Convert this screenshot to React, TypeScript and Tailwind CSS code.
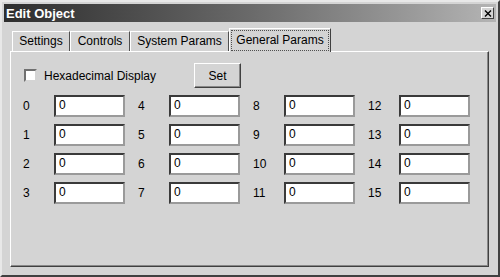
import React from "react";

const font = { fontFamily: '"Liberation Sans", Arial, sans-serif' };

function Field({ label }: { label: string }) {
  return (
    <div className="flex items-center h-[22px]">
      <span className="w-[31px] text-[12px] text-black">{label}</span>
      <div className="w-[71px] h-[22px] bg-white border-2 border-t-[#3a3a3a] border-l-[#3a3a3a] border-r-[#9a9a9a] border-b-[#9a9a9a] pl-[3px] text-[12px] leading-[16px] text-black">
        0
      </div>
    </div>
  );
}

function Tab({ label, active }: { label: string; active?: boolean }) {
  if (active) {
    return (
      <div className="relative z-10 -mb-px h-[24px] w-[102px] bg-[#d4d4d4] border border-b-0 border-t-white border-l-white border-r-[#404040] p-px">
        <div className="h-full border border-dotted border-[#505050] text-[12px] leading-[19px] text-center text-black whitespace-nowrap">
          {label}
        </div>
      </div>
    );
  }
  return (
    <div className="w-full h-[20px] bg-[#d4d4d4] border border-b-0 border-t-white border-l-white border-r-[#505050] text-[12px] leading-[19px] text-center text-black whitespace-nowrap">
      {label}
    </div>
  );
}

export default function App() {
  const cols = [
    ["0", "1", "2", "3"],
    ["4", "5", "6", "7"],
    ["8", "9", "10", "11"],
    ["12", "13", "14", "15"],
  ];

  return (
    <div
      style={font}
      className="w-[500px] h-[277px] bg-[#d4d4d4] border-2 border-t-[#e8e8e8] border-l-[#e8e8e8] border-r-[#404040] border-b-[#404040] p-[2px] flex flex-col"
    >
      <div className="h-[18px] flex items-center justify-between bg-gradient-to-r from-[#2e2e2e] via-[#6a6a6a] to-[#b4b4b4] pl-[2px] pr-[2px]">
        <span className="text-[13px] font-bold text-white leading-none">Edit Object</span>
        <div className="w-[13px] h-[12px] bg-[#d4d4d4] border border-t-white border-l-white border-r-[#404040] border-b-[#404040] flex items-center justify-center">
          <svg width="8" height="7" viewBox="0 0 8 7">
            <path d="M1 0.5 L7 6.5 M7 0.5 L1 6.5" stroke="#000" strokeWidth="1.4" />
          </svg>
        </div>
      </div>

      <div className="mt-[6px] ml-[6px] mr-[7px] flex flex-col">
        <div className="flex items-end pl-[2px]">
          <div className="w-[58px]"><Tab label="Settings" /></div>
          <div className="w-[60px]"><Tab label="Controls" /></div>
          <div className="w-[99px]"><Tab label="System Params" /></div>
          <Tab label="General Params" active />
        </div>

        <div className="h-[216px] border border-t-white border-l-white border-r-[#404040] border-b-[#404040] shadow-[inset_-1px_-1px_0_#888888] pl-[12px] pt-[11px]">
          <div className="w-[218px] h-[25px] flex items-center justify-between">
            <label className="flex items-center ml-px">
              <span className="w-[13px] h-[13px] bg-white border-2 border-t-[#707070] border-l-[#707070] border-r-[#d4d4d4] border-b-[#d4d4d4]" />
              <span className="ml-[7px] text-[12px] text-black">Hexadecimal Display</span>
            </label>
            <button className="w-[47px] h-[25px] bg-[#d4d4d4] border border-t-white border-l-white border-r-[#404040] border-b-[#404040] shadow-[inset_-1px_-1px_0_#888888] text-[12px] text-black">
              Set
            </button>
          </div>

          <div className="mt-[7px] flex">
            {cols.map((col, i) => (
              <div key={i} className="w-[115px] flex flex-col gap-[7px]">
                {col.map((l) => (
                  <Field key={l} label={l} />
                ))}
              </div>
            ))}
          </div>
        </div>
      </div>
    </div>
  );
}
